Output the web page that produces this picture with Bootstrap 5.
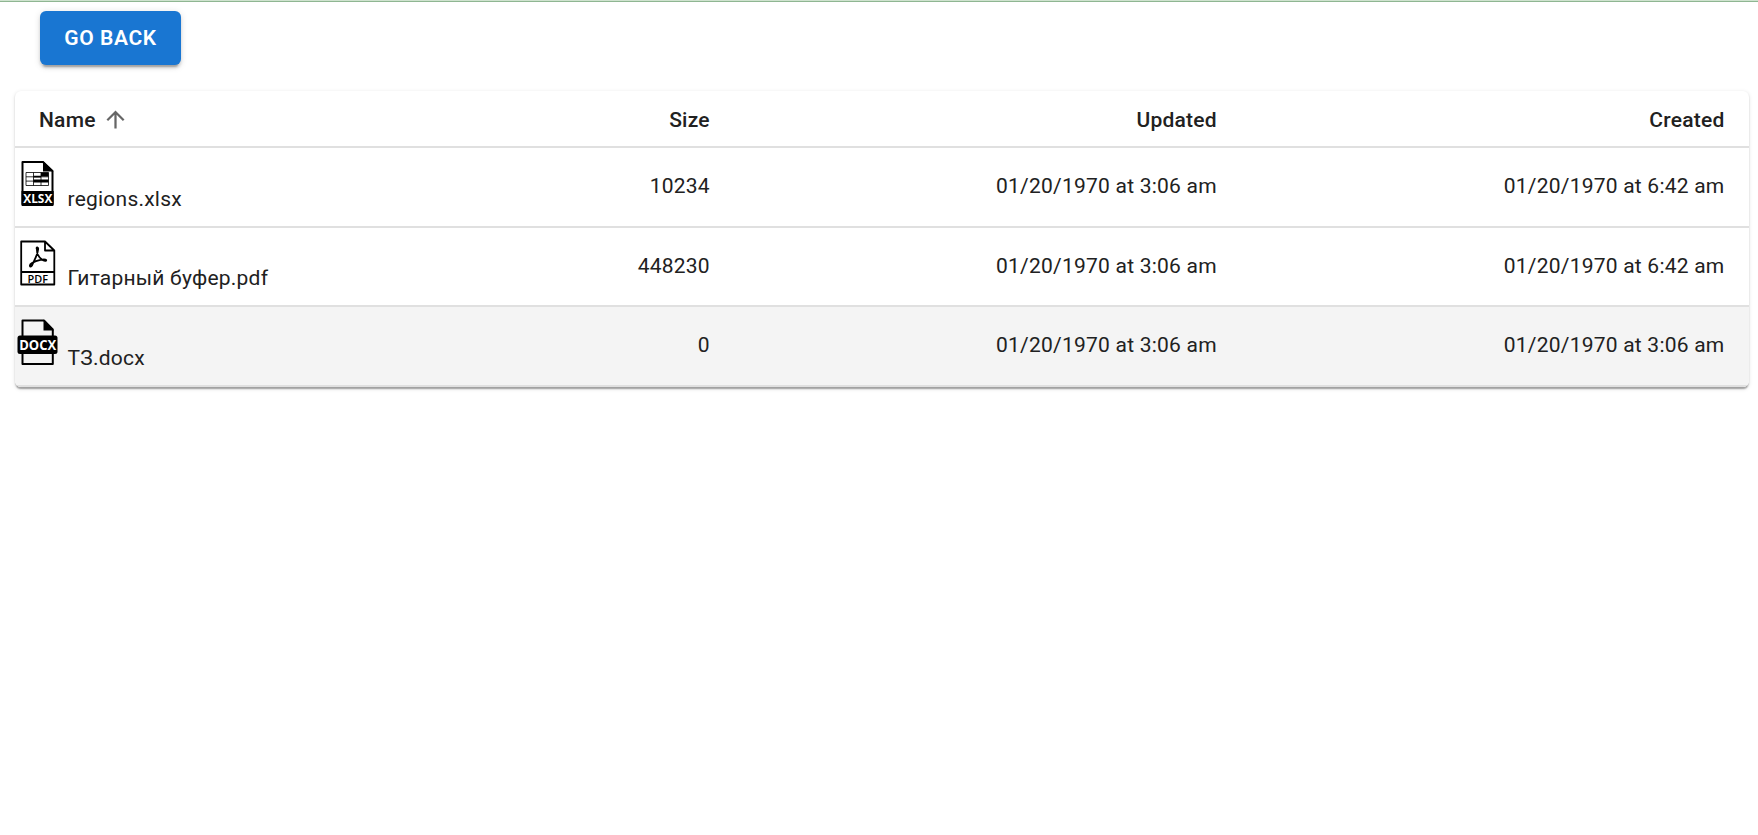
<!DOCTYPE html>
<html lang="en">
<head>
<meta charset="utf-8">
<meta name="viewport" content="width=device-width, initial-scale=1">
<title>Files</title>
<link href="https://cdn.jsdelivr.net/npm/bootstrap@5.3.0/dist/css/bootstrap.min.css" rel="stylesheet">
<style>
body{font-family:Roboto,"Noto Sans",sans-serif;font-size:21px;color:#212121;letter-spacing:.225px}
.top-rule{height:2px;background:linear-gradient(#cfe3cf 50%,#8fb692 50%)}
.back-btn{--bs-btn-bg:#1976d2;--bs-btn-border-color:#1976d2;--bs-btn-color:#fff;--bs-btn-font-size:21px;--bs-btn-font-weight:600;--bs-btn-border-width:0;--bs-btn-padding-x:0;--bs-btn-padding-y:0;--bs-btn-border-radius:6px;height:54px;width:141px;margin:9px 0 0 40px;padding-top:2px;letter-spacing:.6px;box-shadow:0 4.5px 1.5px -3px rgba(0,0,0,.2),0 3px 3px rgba(0,0,0,.14),0 1.5px 7.5px rgba(0,0,0,.12)}
.file-panel{margin:26px 9.5px 0 15px;border-radius:6px;overflow:hidden;box-shadow:0 3px 1.5px -1.5px rgba(0,0,0,.2),0 1.5px 1.5px rgba(0,0,0,.14),0 1.5px 4.5px rgba(0,0,0,.12)}
.file-table{table-layout:fixed;border-collapse:separate;border-spacing:0;--bs-table-color:#212121;--bs-table-bg:transparent}
.file-table>:not(caption)>*>*{border-bottom:2px solid #e0e0e0;padding:0 24px;text-align:right;vertical-align:middle;line-height:30px}
.file-table>thead>tr>th{font-weight:500;height:57px;padding-top:2px}
.file-table>tbody>tr>td{height:79.5px;padding-bottom:1.5px}
.file-table>tbody>tr>td:first-child{text-align:left;padding:0 0 1.5px 1px}
.file-table>thead>tr>th:first-child{text-align:left}
.file-table .picked{--bs-table-bg:#f4f4f4}
.file-icon{width:44px;height:52px;flex:none}
.file-name{padding:25.5px 0 0 7.500px;margin-bottom:.5px}
.sort-arrow{margin-left:6px}
</style>
</head>
<body class="min-vh-100">
<div class="top-rule"></div>
<button type="button" class="btn back-btn d-block text-uppercase">Go back</button>
<div class="file-panel bg-white">
<table class="table file-table w-100 mb-0">
<colgroup><col style="width:465px"><col style="width:253.8px"><col style="width:507px"><col style="width:507.7px"></colgroup>
<thead><tr>
<th><div class="d-flex align-items-center">Name
<svg class="sort-arrow" width="27" height="27" viewBox="0 0 24 24" fill="#666"><path d="M4 12l1.41 1.41L11 7.83V20h2V7.83l5.58 5.59L20 12l-8-8-8 8z"/></svg></div></th>
<th>Size</th><th>Updated</th><th>Created</th>
</tr></thead>
<tbody>
<tr>
<td><div class="d-flex"><svg class="file-icon" viewBox="0 0 44 52">
<path d="M6.500 4H27L36.500 13V47H6.500Z" fill="#fff" stroke="#000" stroke-width="2" stroke-linejoin="round"/><path d="M27 3L37.500 13.500H27ZM5.500 33H37.700V46Q37.700 48 35.700 48H7.500Q5.500 48 5.500 46Z"/>
<path d="M10 14.500H32.500V27.500H10ZM10 18.800H32.500M10 23.100H32.500M17.500 14.500V27.500M25 14.500V27.500" fill="none" stroke="#000" stroke-width=".8"/><path d="M25 14.500H32.500V18.500H25ZM17.500 17.800H25V19.500H17.500ZM17.500 21.500H32.500V24.500H17.500Z"/>
<text x="21.800" y="45" text-anchor="middle" textLength="29" lengthAdjust="spacingAndGlyphs" fill="#fff" font-family="Open Sans" font-weight="700" font-size="13" letter-spacing="0">XLSX</text></svg>
<span class="file-name">regions.xlsx</span></div></td>
<td>10234</td><td>01/20/1970 at 3:06 am</td><td>01/20/1970 at 6:42 am</td>
</tr>
<tr>
<td><div class="d-flex"><svg class="file-icon" viewBox="0 0 44 52">
<path d="M5.200 3.500H29L38.300 12.500V46.500H5.200ZM29 3.500V12.500H38.300M5.200 34H38.300" fill="none" stroke="#000" stroke-width="1.800" stroke-linejoin="round"/>
<path d="M21 11.500C19.500 8.500 23 8.500 22 12C21.500 17.500 17 24.500 16 27.500C14 30.500 12.500 27 16 25C21 22 29 20.500 30.200 22C30.500 24.500 24 22 21.800 16.500Q20.800 14 21 11.500Z" fill="none" stroke="#000" stroke-width="1.800"/>
<text x="21.800" y="44.500" text-anchor="middle" textLength="20.500" lengthAdjust="spacingAndGlyphs" font-family="Open Sans" font-weight="600" font-size="11.500" letter-spacing="0">PDF</text></svg>
<span class="file-name">Гитарный буфер.pdf</span></div></td>
<td>448230</td><td>01/20/1970 at 3:06 am</td><td>01/20/1970 at 6:42 am</td>
</tr>
<tr class="picked">
<td><div class="d-flex"><svg class="file-icon" viewBox="0 0 44 52">
<path d="M6.500 3.500H28L36.800 12.500V47H6.500Z" fill="none" stroke="#000" stroke-width="2" stroke-linejoin="round"/><path d="M27.500 2.500L37.800 13.500H27.500Z"/><rect x="1.500" y="18.500" width="40" height="18.500" rx="2.500"/>
<text x="21.700" y="32.500" text-anchor="middle" textLength="37" lengthAdjust="spacingAndGlyphs" fill="#fff" font-family="Open Sans" font-weight="700" font-size="14.500" letter-spacing="0">DOCX</text></svg>
<span class="file-name">ТЗ.docx</span></div></td>
<td>0</td><td>01/20/1970 at 3:06 am</td><td>01/20/1970 at 3:06 am</td>
</tr>
</tbody>
</table>
</div>
<script src="https://cdn.jsdelivr.net/npm/bootstrap@5.3.0/dist/js/bootstrap.bundle.min.js"></script>
</body>
</html>
